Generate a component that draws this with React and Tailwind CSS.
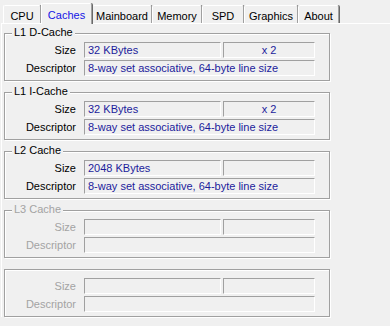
import React from 'react';

const TABS = [
  { name: 'CPU', w: 'w-[38px]' },
  { name: 'Caches', w: 'w-[51px]', active: true },
  { name: 'Mainboard', w: 'w-[60px]' },
  { name: 'Memory', w: 'w-[50px]' },
  { name: 'SPD', w: 'w-[42px]' },
  { name: 'Graphics', w: 'w-[54px]' },
  { name: 'About', w: 'w-[41px]' },
];

const GROUPS = [
  { title: 'L1 D-Cache', size: '32 KBytes', count: 'x 2', desc: '8-way set associative, 64-byte line size' },
  { title: 'L1 I-Cache', size: '32 KBytes', count: 'x 2', desc: '8-way set associative, 64-byte line size' },
  { title: 'L2 Cache', size: '2048 KBytes', count: '', desc: '8-way set associative, 64-byte line size' },
  { title: 'L3 Cache', size: '', count: '', desc: '', disabled: true },
  { title: '', size: '', count: '', desc: '', disabled: true },
];

// sunken edit-style box, grey top/left and white bottom/right
const Field = ({ children, className = '' }) => (
  <div
    className={`h-[16px] border border-t-[#a0a0a0] border-l-[#a0a0a0] border-b-white border-r-white px-[3px] leading-[14px] text-[#1c1c9c] whitespace-nowrap overflow-hidden ${className}`}
  >
    {children}
  </div>
);

const Row = ({ label, disabled, children }) => (
  <div className="flex items-center">
    <div className={`w-[71px] text-right leading-[14px] ${disabled ? 'text-[#a3a3a3]' : 'text-black'}`}>
      {label}
    </div>
    <div className="ml-[8px] flex flex-1 gap-[2px]">{children}</div>
  </div>
);

const CacheGroup = ({ title, size, count, desc, disabled }) => (
  <div className="relative w-[326px] h-[48px] border border-[#a0a0a0] shadow-[inset_1px_1px_0_#fff,1px_1px_0_#fff] pt-[8px] pr-[14px] flex flex-col gap-[2px]">
    {title && (
      <span
        className={`absolute left-[7px] top-[-8px] px-[2px] bg-[#f0f0f0] leading-[13px] ${disabled ? 'text-[#a3a3a3]' : 'text-black'}`}
      >
        {title}
      </span>
    )}
    <Row label="Size" disabled={disabled}>
      <Field className="w-[137px]">{size}</Field>
      <Field className="flex-1 text-center">{count}</Field>
    </Row>
    <Row label="Descriptor" disabled={disabled}>
      <Field className="flex-1">{desc}</Field>
    </Row>
  </div>
);

export default function App() {
  return (
    <div
      className="w-[390px] h-[326px] bg-[#f0f0f0] text-[11px] overflow-hidden"
      style={{ fontFamily: '"Liberation Sans", Arial, sans-serif' }}
    >
      {/* tab strip */}
      <div className="h-[23px] flex items-end pl-[3px]">
        {TABS.map((tab) =>
          tab.active ? (
            <div
              key={tab.name}
              className={`${tab.w} h-[21px] mb-[-1px] relative z-10 bg-[#f0f0f0] border-l border-t border-white border-r border-r-[#a0a0a0] shadow-[1px_0_0_#696969] rounded-t-[2px] flex justify-center pt-[3px] text-[#1414e6]`}
            >
              {tab.name}
            </div>
          ) : (
            <div
              key={tab.name}
              className={`${tab.w} h-[18px] bg-[#f0f0f0] border-l border-t border-white border-r border-r-[#a0a0a0] shadow-[1px_0_0_#696969] rounded-t-[2px] flex justify-center pt-[2px] text-black`}
            >
              {tab.name}
            </div>
          )
        )}
      </div>

      {/* tab page */}
      <div className="ml-[1px] border-t border-l border-white pl-[2px] pt-[9px] flex flex-col gap-[11px]">
        {GROUPS.map((g, i) => (
          <CacheGroup key={i} {...g} />
        ))}
      </div>
    </div>
  );
}
